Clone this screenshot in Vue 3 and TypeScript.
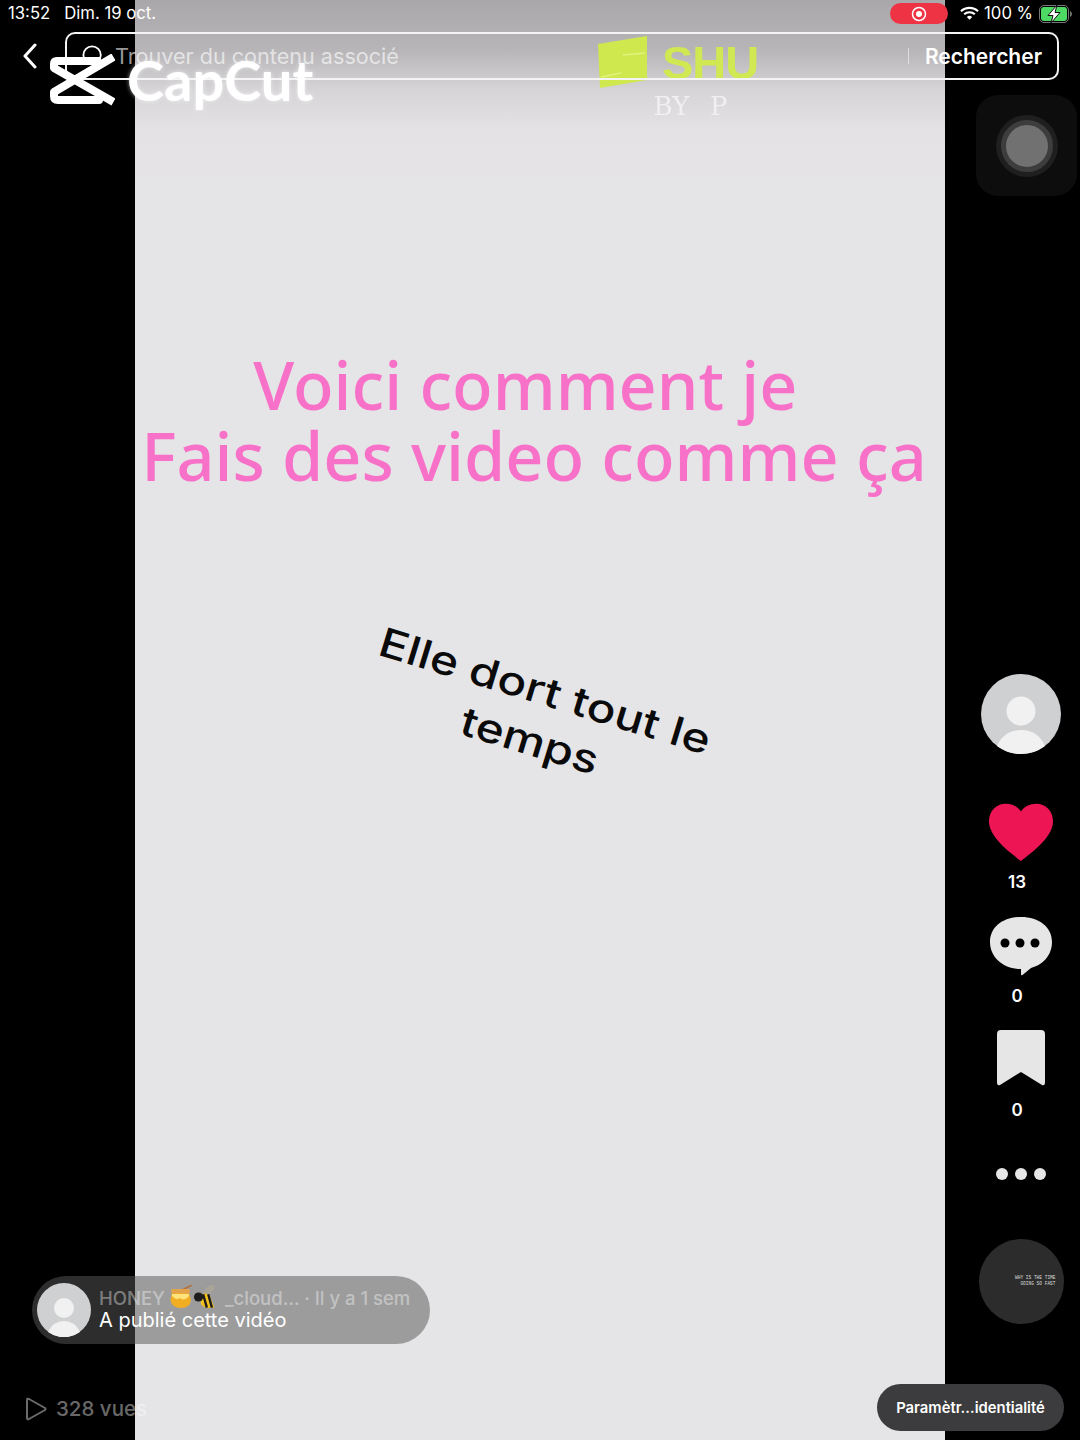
<script setup lang="ts">
const rail = [
  { id: 'like', count: '13' },
  { id: 'comment', count: '0' },
  { id: 'save', count: '0' },
]
</script>

<template>
  <div class="screen">
    <main class="video">
      <div class="brand">
        <div class="shu">
          <svg class="shu-mark" viewBox="0 0 52 52" aria-hidden="true">
            <path d="M1 8 L50 0 V44 L3 52 Z" fill="#cfe84e" />
            <path d="M26 19 L48 17 M4 41 L24 37" stroke="#e3f17f" stroke-width="1.5" />
          </svg>
          <span class="shu-name">SHU</span>
        </div>
        <div class="by">BY&nbsp;&nbsp;P</div>
      </div>
      <h1 class="headline">Voici comment je&nbsp;<br />Fais des video comme ça</h1>
      <p class="tilted">Elle dort tout le<br />temps</p>
    </main>

    <div class="overlay">
      <header class="status">
        <div class="status-left">
          <span>13:52</span>
          <span>Dim. 19 oct.</span>
        </div>
        <div class="status-right">
          <span class="rec">
            <svg viewBox="0 0 16 16" width="16" height="16" aria-hidden="true">
              <circle cx="8" cy="8" r="6.5" fill="none" stroke="#fff" stroke-width="1.5" />
              <circle cx="8" cy="8" r="3" fill="#fff" />
            </svg>
          </span>
          <svg class="wifi" viewBox="0 0 20 15" aria-hidden="true">
            <path d="M1 5.2 A13 13 0 0 1 19 5.2" fill="none" stroke="#fff" stroke-width="2.2" />
            <path d="M4.4 8.4 A8.2 8.2 0 0 1 15.6 8.4" fill="none" stroke="#fff" stroke-width="2.2" />
            <path d="M7.2 11.2 A4 4 0 0 1 12.8 11.2 L10 14.2 Z" fill="#fff" />
          </svg>
          <span>100 %</span>
          <svg class="battery" viewBox="0 0 34 18" aria-hidden="true">
            <rect x="0.5" y="0.5" width="29" height="17" rx="4.5" fill="none" stroke="#777" />
            <rect x="2" y="2" width="26" height="14" rx="3" fill="#4cd964" />
            <path d="M31 6 q2 1 2 3 t-2 3 Z" fill="#777" />
            <path d="M18 0 L9 10.5 H14 L12 18 L21 7.5 H16 Z" fill="#fff" stroke="#111" stroke-width="1" />
          </svg>
        </div>
      </header>

      <div class="search-row">
        <svg class="back" viewBox="0 0 16 26" aria-hidden="true">
          <path d="M13 2 L3 13 L13 24" fill="none" stroke="#fff" stroke-width="3" stroke-linecap="round" stroke-linejoin="round" />
        </svg>
        <div class="search">
          <svg class="lens" viewBox="0 0 24 24" aria-hidden="true">
            <circle cx="11" cy="11" r="9.5" fill="none" stroke="#fff" stroke-width="2" />
          </svg>
          <span class="placeholder">Trouver du contenu associé</span>
          <i class="divider"></i>
          <span class="go">Rechercher</span>
        </div>
      </div>

      <div class="capcut">
        <svg class="capcut-mark" viewBox="0 0 66 52" aria-hidden="true">
          <path d="M48 7 H8 Q5 7 5 10 V14 L61 46 M61 5 L5 38 V42 Q5 46 9 46 H50 V42" fill="none" stroke="#fff" stroke-width="8" stroke-linejoin="round" stroke-linecap="square" />
        </svg>
        <span class="capcut-name">CapCut</span>
      </div>

      <div class="assistive">
        <span class="assistive-ring"><span class="assistive-dot"></span></span>
      </div>

      <aside class="rail">
        <div class="avatar avatar-large">
          <svg viewBox="0 0 80 80" aria-hidden="true">
            <circle cx="40" cy="40" r="40" fill="#cfd0d2" />
            <circle cx="40" cy="37" r="14.5" fill="#f1f1f1" />
            <path d="M16 72 Q23 56 40 56 Q57 56 64 72 A40 40 0 0 1 16 72 Z" fill="#f1f1f1" />
          </svg>
        </div>
        <div v-for="item in rail" :key="item.id" class="action" :class="`action-${item.id}`">
          <svg v-if="item.id === 'like'" class="ico-like" viewBox="0 0 68 60" aria-hidden="true">
            <path d="M34 60 C27 54 1 37 1 19 C1 8 9 1 18 1 C25 1 31 4 34 9 C37 4 43 1 50 1 C59 1 67 8 67 19 C67 37 41 54 34 60 Z" fill="#ee1555" />
          </svg>
          <svg v-else-if="item.id === 'comment'" class="ico-comment" viewBox="0 0 64 60" aria-hidden="true">
            <path d="M32 1 C50 1 63 11 63 26 C63 40 53 49 42 52 L33.5 59 Q32 60 32 58 V53 C14 53 1 41 1 26 C1 11 14 1 32 1 Z" fill="#e6e6e6" />
            <circle cx="16" cy="27" r="4.5" fill="#000" />
            <circle cx="31" cy="27" r="4.5" fill="#000" />
            <circle cx="46" cy="27" r="4.5" fill="#000" />
          </svg>
          <svg v-else class="ico-save" viewBox="0 0 48 56" aria-hidden="true">
            <path d="M4 0 H44 Q48 0 48 4 V52 Q48 56 45 55 L24 42 L3 55 Q0 56 0 52 V4 Q0 0 4 0 Z" fill="#e6e6e6" />
          </svg>
          <span class="count">{{ item.count }}</span>
        </div>
        <div class="more"><i></i><i></i><i></i></div>
        <div class="disc">
          <span class="disc-text">WHY IS THE TIME<br />GOING SO FAST</span>
        </div>
      </aside>

      <div class="notice">
        <div class="avatar avatar-small">
          <svg viewBox="0 0 54 54" aria-hidden="true">
            <circle cx="27" cy="27" r="27" fill="#cfd0d2" />
            <circle cx="27" cy="25" r="10" fill="#f1f1f1" />
            <path d="M11 49 Q16 38 27 38 Q38 38 43 49 A27 27 0 0 1 11 49 Z" fill="#f1f1f1" />
          </svg>
        </div>
        <div class="notice-text">
          <div class="notice-top">
            <span>HONEY</span>
            <svg class="emoji emoji-pot" viewBox="0 0 24 24" aria-hidden="true">
              <path d="M13 5 L23 0" stroke="#b5703a" stroke-width="1.5" />
              <path d="M3 8 H20 L22 15 Q21 23 12 23 Q3 23 1.500 15 Z" fill="#f2ae22" />
              <path d="M3 4 H20 Q22 6 20 8.500 H3 Q1 6 3 4 Z" fill="#e3a34b" />
              <path d="M3 11 Q7 16 11 13 Q15 17 20 11 V9 H3 Z" fill="#ffe27a" />
            </svg>
            <svg class="emoji emoji-bee" viewBox="0 0 26 26" aria-hidden="true">
              <path d="M11 8 Q15 -1 23 0 Q25 6 15 11 Z" fill="#a8a497" />
              <path d="M7 12 Q12 7 18 11 L23 24 Q14 27 9 21 Z" fill="#f4c21d" />
              <path d="M11 10 L15 24.500 M16.500 10 L20.500 24.500" stroke="#1d1d1d" stroke-width="2.6" />
              <circle cx="6" cy="13" r="5" fill="#1d1d1d" />
            </svg>
            <span>_cloud… · Il y a 1 sem</span>
          </div>
          <div class="notice-sub">A publié cette vidéo</div>
        </div>
      </div>

      <div class="views">
        <svg class="play" viewBox="0 0 22 24" aria-hidden="true">
          <path d="M2 3 Q2 1 4 2 L20 11 Q21 12 20 13 L4 22 Q2 23 2 21 Z" fill="none" stroke="currentColor" stroke-width="2" stroke-linejoin="round" />
        </svg>
        <span>328 vues</span>
      </div>

      <div class="privacy">Paramètr…identialité</div>
    </div>
  </div>
</template>

<style scoped>
.screen {
  position: relative;
  width: 1080px;
  height: 1440px;
  overflow: hidden;
  background: #000;
  display: flex;
  justify-content: center;
  font-family: Inter, "Liberation Sans", sans-serif;
  color: #fff;
}
.video {
  width: 810px;
  height: 1440px;
  display: flex;
  flex-direction: column;
  align-items: center;
  background: linear-gradient(#a9a7aa 0, #b7b5b8 50px, #d6d4d7 90px, #e4e2e5 130px, #e5e4e7 200px);
}
.brand {
  margin: 36px 0 0 319px;
  display: flex;
  flex-direction: column;
  align-items: center;
  filter: blur(0.7px);
}
.shu { display: flex; align-items: center; gap: 13px; margin-left: -44px; }
.shu-mark { width: 52px; height: 52px; }
.shu-name {
  font: 700 47px/1 "Liberation Sans", sans-serif;
  color: #d0e852;
  letter-spacing: -1px;
}
.by {
  margin-top: 2px;
  margin-left: -18px;
  font: 400 26px/32px "DejaVu Serif", serif;
  color: #f0eff1;
  word-spacing: 2px;
}
.headline {
  margin: 227px 0 0 -12px;
  font: 500 66.5px/71px "Noto Sans", sans-serif;
  color: #f871c8;
  text-align: center;
  white-space: nowrap;
}
.tilted {
  margin: 173px 0 0 -5px;
  font: 500 40px/52px Inter, sans-serif;
  color: #0a0a0a;
  text-align: center;
  transform: rotate(17deg) scaleX(1.2);
  white-space: nowrap;
}
.overlay {
  position: absolute;
  inset: 0;
}
.status {
  height: 27px;
  padding: 0 7px 0 8px;
  display: flex;
  justify-content: space-between;
  align-items: center;
  font-size: 16.7px;
  line-height: 1;
}
.status-left { display: flex; gap: 14px; }
.status-right { display: flex; align-items: center; }
.rec {
  width: 58px;
  height: 21px;
  border-radius: 11px;
  background: #ee3344;
  display: flex;
  align-items: center;
  justify-content: center;
}
.wifi { width: 19px; height: 15px; margin: 0 5px 0 12px; }
.battery { width: 34px; height: 18px; margin-left: 6px; }
.search-row {
  margin-top: 5px;
  height: 48px;
  padding: 0 21px 0 22px;
  display: flex;
  align-items: center;
  gap: 27px;
}
.back { width: 16px; height: 26px; flex: none; }
.search {
  flex: 1;
  height: 48px;
  box-sizing: border-box;
  border: 2px solid #f4f4f4;
  border-radius: 10px;
  padding: 0 15px;
  display: flex;
  align-items: center;
}
.lens { width: 22px; height: 22px; flex: none; }
.placeholder { margin-left: 11px; font-size: 21.6px; color: rgba(255, 255, 255, 0.62); white-space: nowrap; }
.divider { width: 1px; height: 16px; background: rgba(255, 255, 255, 0.5); margin-left: auto; }
.go { margin-left: 16px; font-size: 21px; font-weight: 600; }
.capcut {
  position: absolute;
  left: 49px;
  top: 52px;
  display: flex;
  align-items: center;
  gap: 12px;
}
.capcut-mark { width: 66px; height: 52px; }
.capcut-name {
  font: 700 56px/56px Lato, sans-serif;
  color: #fff;
  text-shadow: 0 0 4px rgba(255, 255, 255, 0.6);
}
.assistive {
  position: absolute;
  left: 976px;
  top: 95px;
  width: 101px;
  height: 101px;
  border-radius: 22px;
  background: #0d0d0d;
  display: flex;
  align-items: center;
  justify-content: center;
}
.assistive-ring {
  width: 62px;
  height: 62px;
  border-radius: 50%;
  background: #1f1f1f;
  display: flex;
  align-items: center;
  justify-content: center;
}
.assistive-dot {
  width: 42px;
  height: 42px;
  border-radius: 50%;
  background: #717171;
  border: 5px solid #3d3d3d;
}
.rail {
  position: absolute;
  right: 18px;
  top: 674px;
  width: 82px;
  display: flex;
  flex-direction: column;
  align-items: center;
}
.avatar svg { display: block; width: 100%; height: 100%; }
.avatar-large { width: 80px; height: 80px; margin-bottom: 48px; }
.action { display: flex; flex-direction: column; align-items: center; height: 114px; }
.count { font-size: 17px; font-weight: 600; margin-left: -8px; line-height: 20px; }
.ico-like { width: 66px; height: 60px; margin-bottom: 10px; }
.ico-comment { width: 64px; height: 60px; margin-bottom: 10px; }
.ico-save { width: 48px; height: 56px; margin-bottom: 14px; }
.more { display: flex; gap: 7px; margin-top: 24px; }
.more i { width: 12px; height: 12px; border-radius: 50%; background: #e6e6e6; }
.disc {
  margin-top: 59px;
  width: 85px;
  height: 85px;
  border-radius: 50%;
  background: #2c2c2c;
  display: flex;
  align-items: center;
  justify-content: flex-end;
}
.disc-text {
  font: 400 4.5px/6px "Liberation Mono", monospace;
  color: #ddd;
  text-align: right;
  margin: 0 8px 2px 0;
}
.notice {
  position: absolute;
  left: 32px;
  top: 1276px;
  width: 398px;
  height: 68px;
  border-radius: 34px;
  background: rgba(87, 87, 87, 0.515);
  display: flex;
  align-items: center;
  gap: 8px;
  padding-left: 5px;
  box-sizing: border-box;
}
.avatar-small { width: 54px; height: 54px; }
.notice-text { display: flex; flex-direction: column; padding-bottom: 2px; }
.notice-top {
  display: flex;
  align-items: center;
  font-size: 18.5px;
  font-weight: 500;
  line-height: 22px;
  color: rgba(255, 255, 255, 0.4);
  white-space: nowrap;
}
.emoji { width: 24px; height: 24px; flex: none; margin-top: -1px; }
.emoji-pot { margin-left: 4px; }
.emoji-bee { margin-right: 8px; }
.notice-sub { font-size: 20px; line-height: 23px; white-space: nowrap; }
.views {
  position: absolute;
  left: 25px;
  top: 1396px;
  display: flex;
  align-items: center;
  gap: 9px;
  font-size: 20.5px;
  font-weight: 500;
  color: rgba(255, 255, 255, 0.42);
}
.play { width: 22px; height: 24px; }
.privacy {
  position: absolute;
  left: 877px;
  top: 1384px;
  width: 187px;
  height: 47px;
  border-radius: 24px;
  background: #3c3c3e;
  display: flex;
  align-items: center;
  justify-content: center;
  font-size: 14.8px;
  font-weight: 600;
  white-space: nowrap;
}
</style>
